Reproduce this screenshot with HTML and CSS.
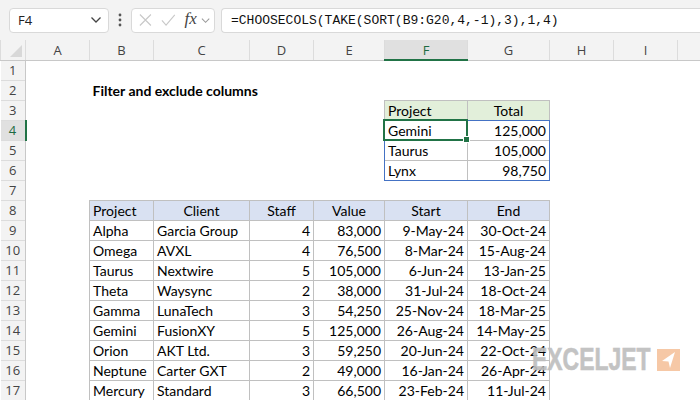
FILE: index.html
```html
<!DOCTYPE html>
<html lang="en">
<head>
    <meta charset="UTF-8">
    <title>Filter and exclude columns</title>
    <link rel="stylesheet" href="styles.css">
</head>
<body>
    <div class="formula-bar">
        <div class="name-box">
            <span>F4</span>
            <svg class="chev" width="12" height="8" viewBox="0 0 12 8"><path d="M1.5 1.5 L6 6 L10.5 1.5" fill="none" stroke="#444" stroke-width="1.3"/></svg>
        </div>
        <svg class="dots" width="4" height="14" viewBox="0 0 4 14"><circle cx="2" cy="2" r="1.4" fill="#555"/><circle cx="2" cy="7" r="1.4" fill="#555"/><circle cx="2" cy="12" r="1.4" fill="#555"/></svg>
        <div class="fx-box">
            <svg width="14" height="14" viewBox="0 0 14 14"><path d="M1 1 L13 13 M13 1 L1 13" stroke="#c8c8c8" stroke-width="1.2"/></svg>
            <svg width="16" height="14" viewBox="0 0 16 14"><path d="M1 7.5 L5.5 12.5 L15 1.5" fill="none" stroke="#c8c8c8" stroke-width="1.2"/></svg>
            <span class="fx">fx</span>
            <svg width="10" height="7" viewBox="0 0 10 7"><path d="M1 1.5 L5 5.5 L9 1.5" fill="none" stroke="#999" stroke-width="1.1"/></svg>
        </div>
        <div class="formula">=CHOOSECOLS(TAKE(SORT(B9:G20,4,-1),3),1,4)</div>
    </div>

    <table class="sheet">
        <colgroup>
            <col style="width:25px"><col style="width:64px"><col style="width:64px"><col style="width:96px">
            <col style="width:64px"><col style="width:71px"><col style="width:83px"><col style="width:82px">
            <col style="width:64px"><col style="width:64px"><col style="width:23px">
        </colgroup>
        <tr class="col-head">
            <th class="corner"><span class="tri"></span></th>
            <th>A</th><th>B</th><th>C</th><th>D</th><th>E</th><th class="active">F</th><th>G</th><th>H</th><th>I</th><th></th>
        </tr>
        <tr><th class="row-head">1</th><td></td><td></td><td></td><td></td><td></td><td></td><td></td><td></td><td></td><td></td></tr>
        <tr><th class="row-head">2</th><td></td><td class="title"><span>Filter and exclude columns</span></td><td></td><td></td><td></td><td></td><td></td><td></td><td></td><td></td></tr>
        <tr><th class="row-head">3</th><td></td><td></td><td></td><td></td><td></td><td class="bd hdr-green">Project</td><td class="bd hdr-green ctr">Total</td><td></td><td></td><td></td></tr>
        <tr><th class="row-head active">4</th><td></td><td></td><td></td><td></td><td></td>
            <td class="bd anchor">Gemini<div class="spill"></div><div class="select"><span class="handle"></span></div></td>
            <td class="bd num">125,000</td><td></td><td></td><td></td></tr>
        <tr><th class="row-head">5</th><td></td><td></td><td></td><td></td><td></td><td class="bd">Taurus</td><td class="bd num">105,000</td><td></td><td></td><td></td></tr>
        <tr><th class="row-head">6</th><td></td><td></td><td></td><td></td><td></td><td class="bd">Lynx</td><td class="bd num">98,750</td><td></td><td></td><td></td></tr>
        <tr><th class="row-head">7</th><td></td><td></td><td></td><td></td><td></td><td></td><td></td><td></td><td></td><td></td></tr>
        <tr><th class="row-head">8</th><td></td>
            <td class="bd hdr-blue">Project</td><td class="bd hdr-blue ctr">Client</td><td class="bd hdr-blue ctr">Staff</td>
            <td class="bd hdr-blue ctr">Value</td><td class="bd hdr-blue ctr">Start</td><td class="bd hdr-blue ctr">End</td><td></td><td></td><td></td></tr>
        <tr><th class="row-head">9</th><td></td><td class="bd">Alpha</td><td class="bd">Garcia Group</td><td class="bd num">4</td><td class="bd num">83,000</td><td class="bd num">9-May-24</td><td class="bd num">30-Oct-24</td><td></td><td></td><td></td></tr>
        <tr><th class="row-head">10</th><td></td><td class="bd">Omega</td><td class="bd">AVXL</td><td class="bd num">4</td><td class="bd num">76,500</td><td class="bd num">8-Mar-24</td><td class="bd num">15-Aug-24</td><td></td><td></td><td></td></tr>
        <tr><th class="row-head">11</th><td></td><td class="bd">Taurus</td><td class="bd">Nextwire</td><td class="bd num">5</td><td class="bd num">105,000</td><td class="bd num">6-Jun-24</td><td class="bd num">13-Jan-25</td><td></td><td></td><td></td></tr>
        <tr><th class="row-head">12</th><td></td><td class="bd">Theta</td><td class="bd">Waysync</td><td class="bd num">2</td><td class="bd num">38,000</td><td class="bd num">31-Jul-24</td><td class="bd num">18-Oct-24</td><td></td><td></td><td></td></tr>
        <tr><th class="row-head">13</th><td></td><td class="bd">Gamma</td><td class="bd">LunaTech</td><td class="bd num">3</td><td class="bd num">54,250</td><td class="bd num">25-Nov-24</td><td class="bd num">18-Mar-25</td><td></td><td></td><td></td></tr>
        <tr><th class="row-head">14</th><td></td><td class="bd">Gemini</td><td class="bd">FusionXY</td><td class="bd num">5</td><td class="bd num">125,000</td><td class="bd num">26-Aug-24</td><td class="bd num">14-May-25</td><td></td><td></td><td></td></tr>
        <tr><th class="row-head">15</th><td></td><td class="bd">Orion</td><td class="bd">AKT Ltd.</td><td class="bd num">3</td><td class="bd num">59,250</td><td class="bd num">20-Jun-24</td><td class="bd num">22-Oct-24</td><td></td><td></td><td></td></tr>
        <tr><th class="row-head">16</th><td></td><td class="bd">Neptune</td><td class="bd">Carter GXT</td><td class="bd num">2</td><td class="bd num">49,000</td><td class="bd num">16-Jan-24</td><td class="bd num">26-Apr-24</td><td></td><td></td><td></td></tr>
        <tr><th class="row-head">17</th><td></td><td class="bd">Mercury</td><td class="bd">Standard</td><td class="bd num">3</td><td class="bd num">66,500</td><td class="bd num">23-Feb-24</td><td class="bd num">11-Jul-24</td><td></td><td></td><td></td></tr>
    </table>

    <div class="watermark">
        <span class="wm-text">EXCELJET</span>
        <svg class="wm-mark" width="23" height="22" viewBox="0 0 23 22"><rect width="23" height="22" fill="#f6c39d"/><path d="M18 3 L5 12 L11.5 12.5 L13 19 Z" fill="#fff"/></svg>
    </div>
</body>
</html>
```

FILE: styles.css
```css
body {
    margin: 0;
    width: 700px;
    height: 400px;
    overflow: hidden;
    position: relative;
    background: #fff;
    font-family: Lato, 'Liberation Sans', sans-serif;
}
.formula-bar {
    display: flex;
    align-items: center;
    height: 40px;
    padding: 0 0 0 9px;
    background: #f3f3f3;
    box-sizing: border-box;
}
.name-box, .fx-box, .formula {
    height: 25px;
    box-sizing: border-box;
    background: #fff;
    border: 1px solid #d9d9d9;
    border-radius: 4px;
    display: flex;
    align-items: center;
}
.name-box {
    width: 100px;
    padding: 0 6px 0 8px;
    justify-content: space-between;
    font-family: 'Open Sans', sans-serif;
    font-size: 13px;
    color: #222;
}
.dots {
    margin: 0 9px 0 9px;
}
.fx-box {
    width: 84px;
    padding: 0 4px 0 7px;
    gap: 9px;
}
.fx-box svg:last-child {
    margin-left: -5px;
}
.fx {
    font-family: 'Liberation Serif', serif;
    font-style: italic;
    font-size: 17px;
    color: #444;
    margin-top: -3px;
}
.formula {
    margin-left: 6px;
    flex: 1;
    border-right: none;
    border-radius: 4px 0 0 4px;
    padding-left: 9px;
    font-family: 'Liberation Mono', monospace;
    font-size: 13px;
    color: #111;
}

.sheet {
    border-collapse: collapse;
    table-layout: fixed;
    width: 700px;
    font-size: 14px;
    color: #000;
}
.sheet tr {
    height: 20px;
}
.sheet th, .sheet td {
    padding: 0 3px;
    height: 20px;
    box-sizing: border-box;
    white-space: nowrap;
    overflow: visible;
}
.col-head th {
    background: #f3f3f3;
    font-family: 'Open Sans', sans-serif;
    font-weight: normal;
    font-size: 13px;
    color: #444;
    border-left: 1px solid #dcdcdc;
    border-bottom: 1px solid #c8c8c8;
    text-align: center;
}
.col-head th.active {
    background: #e0e0e0;
    color: #1d6b42;
    border-bottom: 2px solid #217346;
}
.corner {
    position: relative;
}
.tri {
    position: absolute;
    right: 3px;
    bottom: 3px;
    border-style: solid;
    border-width: 0 0 12px 12px;
    border-color: transparent transparent #d8d8d8 transparent;
}
.row-head {
    background: #f3f3f3;
    font-family: 'Open Sans', sans-serif;
    font-weight: normal;
    font-size: 13px;
    color: #444;
    text-align: center;
    border-top: 1px solid #dcdcdc;
    border-right: 1px solid #c8c8c8;
    padding: 0;
}
.row-head.active {
    background: #e0e0e0;
    color: #1d6b42;
    border-right: 2px solid #217346;
}
.title span {
    font-weight: bold;
    font-size: 14px;
}
.bd {
    border: 1px solid #c0c0c0;
}
.num {
    text-align: right;
}
.ctr {
    text-align: center;
}
.hdr-green {
    background: #e2efda;
}
.hdr-blue {
    background: #d9e1f2;
}
.anchor {
    position: relative;
}
.spill {
    position: absolute;
    left: -1px;
    top: -1px;
    width: 166px;
    height: 61px;
    border: 1px solid #4472c4;
    box-sizing: border-box;
    pointer-events: none;
}
.select {
    position: absolute;
    left: -2px;
    top: -2px;
    right: -1px;
    bottom: -1px;
    border: 2px solid #217346;
}
.handle {
    position: absolute;
    right: -4px;
    bottom: -4px;
    width: 5px;
    height: 5px;
    background: #217346;
    border: 1px solid #fff;
}
.watermark {
    position: absolute;
    left: 532px;
    top: 349px;
    display: flex;
    align-items: flex-start;
    gap: 6px;
    opacity: 0.9;
}
.wm-text {
    display: block;
    width: 160px;
    height: 22px;
    margin-right: -41px;
    font-family: 'Liberation Sans', sans-serif;
    font-weight: bold;
    font-size: 31px;
    line-height: 22px;
    color: #bdbdbd;
    -webkit-text-stroke: 0.6px #bdbdbd;
    transform: scaleX(0.74);
    transform-origin: left center;
}
```
